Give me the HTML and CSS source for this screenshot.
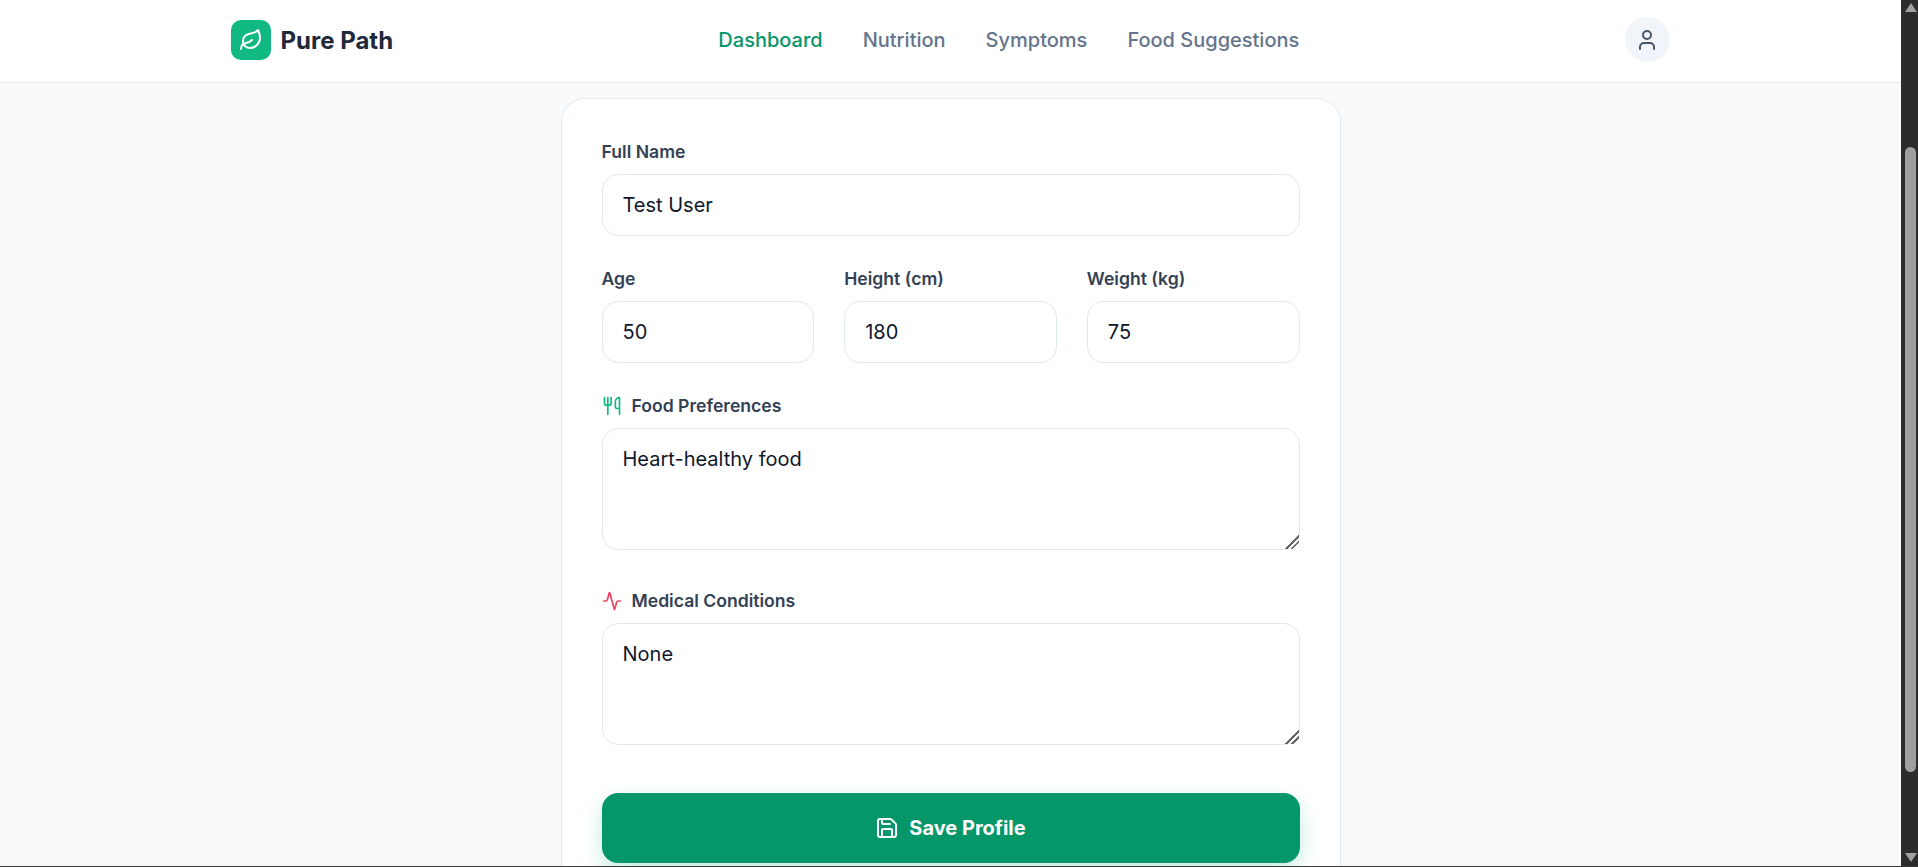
FILE: index.html
```html
<!DOCTYPE html>
<html lang="en">
<head>
    <meta charset="UTF-8">
    <meta name="viewport" content="width=device-width, initial-scale=1.0">
    <title>Pure Path</title>
    <link rel="stylesheet" href="styles.css">
</head>
<body>
    <div class="window">
        <div class="page">
            <header class="topbar">
                <div class="topbar-inner">
                    <a href="#" class="brand">
                        <span class="brand-mark">
                            <svg width="24" height="24" viewBox="0 0 24 24" fill="none" stroke="currentColor" stroke-width="2" stroke-linecap="round" stroke-linejoin="round">
                                <path d="M11 20A7 7 0 0 1 9.8 6.1C15.5 5 17 4.48 19 2c1 2 2 4.18 2 8 0 5.5-4.78 10-10 10Z"/>
                                <path d="M2 21c0-3 1.85-5.36 5.08-6C9.5 14.52 12 13 13 12"/>
                            </svg>
                        </span>
                        <span class="brand-name">Pure Path</span>
                    </a>
                    <nav class="main-nav">
                        <a href="#" class="active">Dashboard</a>
                        <a href="#">Nutrition</a>
                        <a href="#">Symptoms</a>
                        <a href="#">Food Suggestions</a>
                    </nav>
                    <button class="avatar" type="button" aria-label="Profile">
                        <svg width="24" height="24" viewBox="0 0 24 24" fill="none" stroke="currentColor" stroke-width="2" stroke-linecap="round" stroke-linejoin="round">
                            <path d="M19 21v-2a4 4 0 0 0-4-4H9a4 4 0 0 0-4 4v2"/>
                            <circle cx="12" cy="7" r="4"/>
                        </svg>
                    </button>
                </div>
            </header>

            <main class="content">
                <form class="card">
                    <div class="field">
                        <label class="field-label" for="name">Full Name</label>
                        <input class="control" id="name" type="text" value="Test User">
                    </div>

                    <div class="field-row">
                        <div class="field">
                            <label class="field-label" for="age">Age</label>
                            <input class="control" id="age" type="text" value="50">
                        </div>
                        <div class="field">
                            <label class="field-label" for="height">Height (cm)</label>
                            <input class="control" id="height" type="text" value="180">
                        </div>
                        <div class="field">
                            <label class="field-label" for="weight">Weight (kg)</label>
                            <input class="control" id="weight" type="text" value="75">
                        </div>
                    </div>

                    <div class="field">
                        <label class="field-label" for="food">
                            <svg class="icon-food" width="20" height="20" viewBox="0 0 24 24" fill="none" stroke="currentColor" stroke-width="2" stroke-linecap="round" stroke-linejoin="round">
                                <path d="M3 2v7c0 1.1.9 2 2 2h4a2 2 0 0 0 2-2V2"/>
                                <path d="M7 2v20"/>
                                <path d="M21 15V2a5 5 0 0 0-5 5v6c0 1.1.9 2 2 2h3Zm0 0v7"/>
                            </svg>
                            Food Preferences
                        </label>
                        <textarea class="control control-area" id="food">Heart-healthy food</textarea>
                    </div>

                    <div class="field field-medical">
                        <label class="field-label" for="medical">
                            <svg class="icon-medical" width="20" height="20" viewBox="0 0 24 24" fill="none" stroke="currentColor" stroke-width="2" stroke-linecap="round" stroke-linejoin="round">
                                <path d="M22 12h-2.48a2 2 0 0 0-1.93 1.46l-2.35 8.36a.25.25 0 0 1-.48 0L9.24 2.18a.25.25 0 0 0-.48 0l-2.35 8.36A2 2 0 0 1 4.49 12H2"/>
                            </svg>
                            Medical Conditions
                        </label>
                        <textarea class="control control-area" id="medical">None</textarea>
                    </div>

                    <button class="save-button" type="button">
                        <svg width="24" height="24" viewBox="0 0 24 24" fill="none" stroke="currentColor" stroke-width="2" stroke-linecap="round" stroke-linejoin="round">
                            <path d="M15.2 3a2 2 0 0 1 1.4.6l3.8 3.8a2 2 0 0 1 .6 1.4V19a2 2 0 0 1-2 2H5a2 2 0 0 1-2-2V5a2 2 0 0 1 2-2z"/>
                            <path d="M17 21v-7a1 1 0 0 0-1-1H8a1 1 0 0 0-1 1v7"/>
                            <path d="M7 3v4a1 1 0 0 0 1 1h7"/>
                        </svg>
                        Save Profile
                    </button>
                </form>
            </main>
        </div>

        <div class="scrollbar">
            <span class="arrow-up"></span>
            <div class="track">
                <span class="thumb"></span>
            </div>
            <span class="arrow-down"></span>
        </div>
    </div>
</body>
</html>
```

FILE: styles.css
```css
* {
    box-sizing: border-box;
}

html,
body {
    margin: 0;
    height: 100%;
    overflow: hidden;
}

body {
    font-family: "Inter", "Liberation Sans", sans-serif;
    background-color: #f8fafc;
    color: #0f172a;
}

/* Prozor i scrollbar */
.window {
    display: flex;
    height: 867px;
    border-bottom: 1px solid #3a3a3a;
}

.page {
    flex: 1;
    min-width: 0;
    overflow: hidden;
}

.scrollbar {
    width: 17px;
    display: flex;
    flex-direction: column;
    align-items: center;
    background-color: #2c2c2c;
    padding: 3px 0 4px 2px;
}

.track {
    flex: 1;
    width: 100%;
    padding-top: 135px;
    display: flex;
    justify-content: center;
}

.thumb {
    width: 11px;
    height: 625px;
    border-radius: 6px;
    background-color: #a0a0a0;
}

.arrow-up,
.arrow-down {
    width: 0;
    height: 0;
    border-left: 6px solid transparent;
    border-right: 6px solid transparent;
}

.arrow-up {
    border-bottom: 9px solid #a0a0a0;
}

.arrow-down {
    border-top: 9px solid #a0a0a0;
}

/* Zaglavlje */
.topbar {
    height: 83px;
    background-color: #ffffff;
    border-bottom: 1px solid #e2e8f0;
}

.topbar-inner {
    width: 1440px;
    height: 80px;
    margin: 0 auto;
    display: flex;
    align-items: center;
    justify-content: space-between;
}

.brand {
    display: flex;
    align-items: center;
    gap: 10px;
    text-decoration: none;
}

.brand-mark {
    width: 40px;
    height: 40px;
    display: flex;
    align-items: center;
    justify-content: center;
    border-radius: 10px;
    background-color: #10b981;
    color: #ffffff;
}

.brand-name {
    font-size: 24px;
    font-weight: 700;
    color: #1e293b;
}

.main-nav {
    display: flex;
    gap: 40px;
}

.main-nav a {
    font-size: 20px;
    font-weight: 500;
    text-decoration: none;
    color: #64748b;
}

.main-nav a.active {
    color: #059669;
}

.avatar {
    width: 45px;
    height: 45px;
    margin: -1px 1px 0 0;
    display: flex;
    align-items: center;
    justify-content: center;
    padding: 0;
    border: 0;
    border-radius: 50%;
    background-color: #f1f5f9;
    color: #475569;
}

/* Forma */
.content {
    display: flex;
    justify-content: center;
    padding-top: 15px;
}

.card {
    width: 780px;
    padding: 42px 40px 40px;
    background-color: #ffffff;
    border: 1px solid #e2e8f0;
    border-radius: 24px;
}

.field {
    display: flex;
    flex-direction: column;
    gap: 12px;
}

.field-row {
    display: grid;
    grid-template-columns: repeat(3, 1fr);
    gap: 30px;
    margin: 32px 0;
}

.field-medical {
    margin-top: 40px;
}

.field-label {
    display: flex;
    align-items: center;
    gap: 10px;
    height: 21px;
    font-size: 17.6px;
    font-weight: 600;
    color: #334155;
}

.icon-food {
    color: #10b981;
}

.icon-medical {
    color: #f43f5e;
}

.control {
    display: block;
    width: 100%;
    height: 62px;
    padding: 0 20px;
    font-family: inherit;
    font-size: 20px;
    color: #0f172a;
    background-color: #ffffff;
    border: 1px solid #e2e8f0;
    border-radius: 16px;
    outline: none;
}

.control-area {
    height: 122px;
    padding: 16px 20px;
    line-height: 28px;
}

.control-area::-webkit-resizer {
    background: linear-gradient(135deg, transparent 53%, #666666 53% 61%, transparent 61% 72%, #666666 72% 80%, transparent 80%);
}

.save-button {
    width: 100%;
    height: 70px;
    margin-top: 48px;
    display: flex;
    align-items: center;
    justify-content: center;
    gap: 10px;
    font-family: inherit;
    font-size: 20px;
    font-weight: 700;
    color: #ffffff;
    background-color: #059669;
    border: 0;
    border-radius: 16px;
    box-shadow: 0 8px 20px rgba(16, 185, 129, 0.25);
}
```
